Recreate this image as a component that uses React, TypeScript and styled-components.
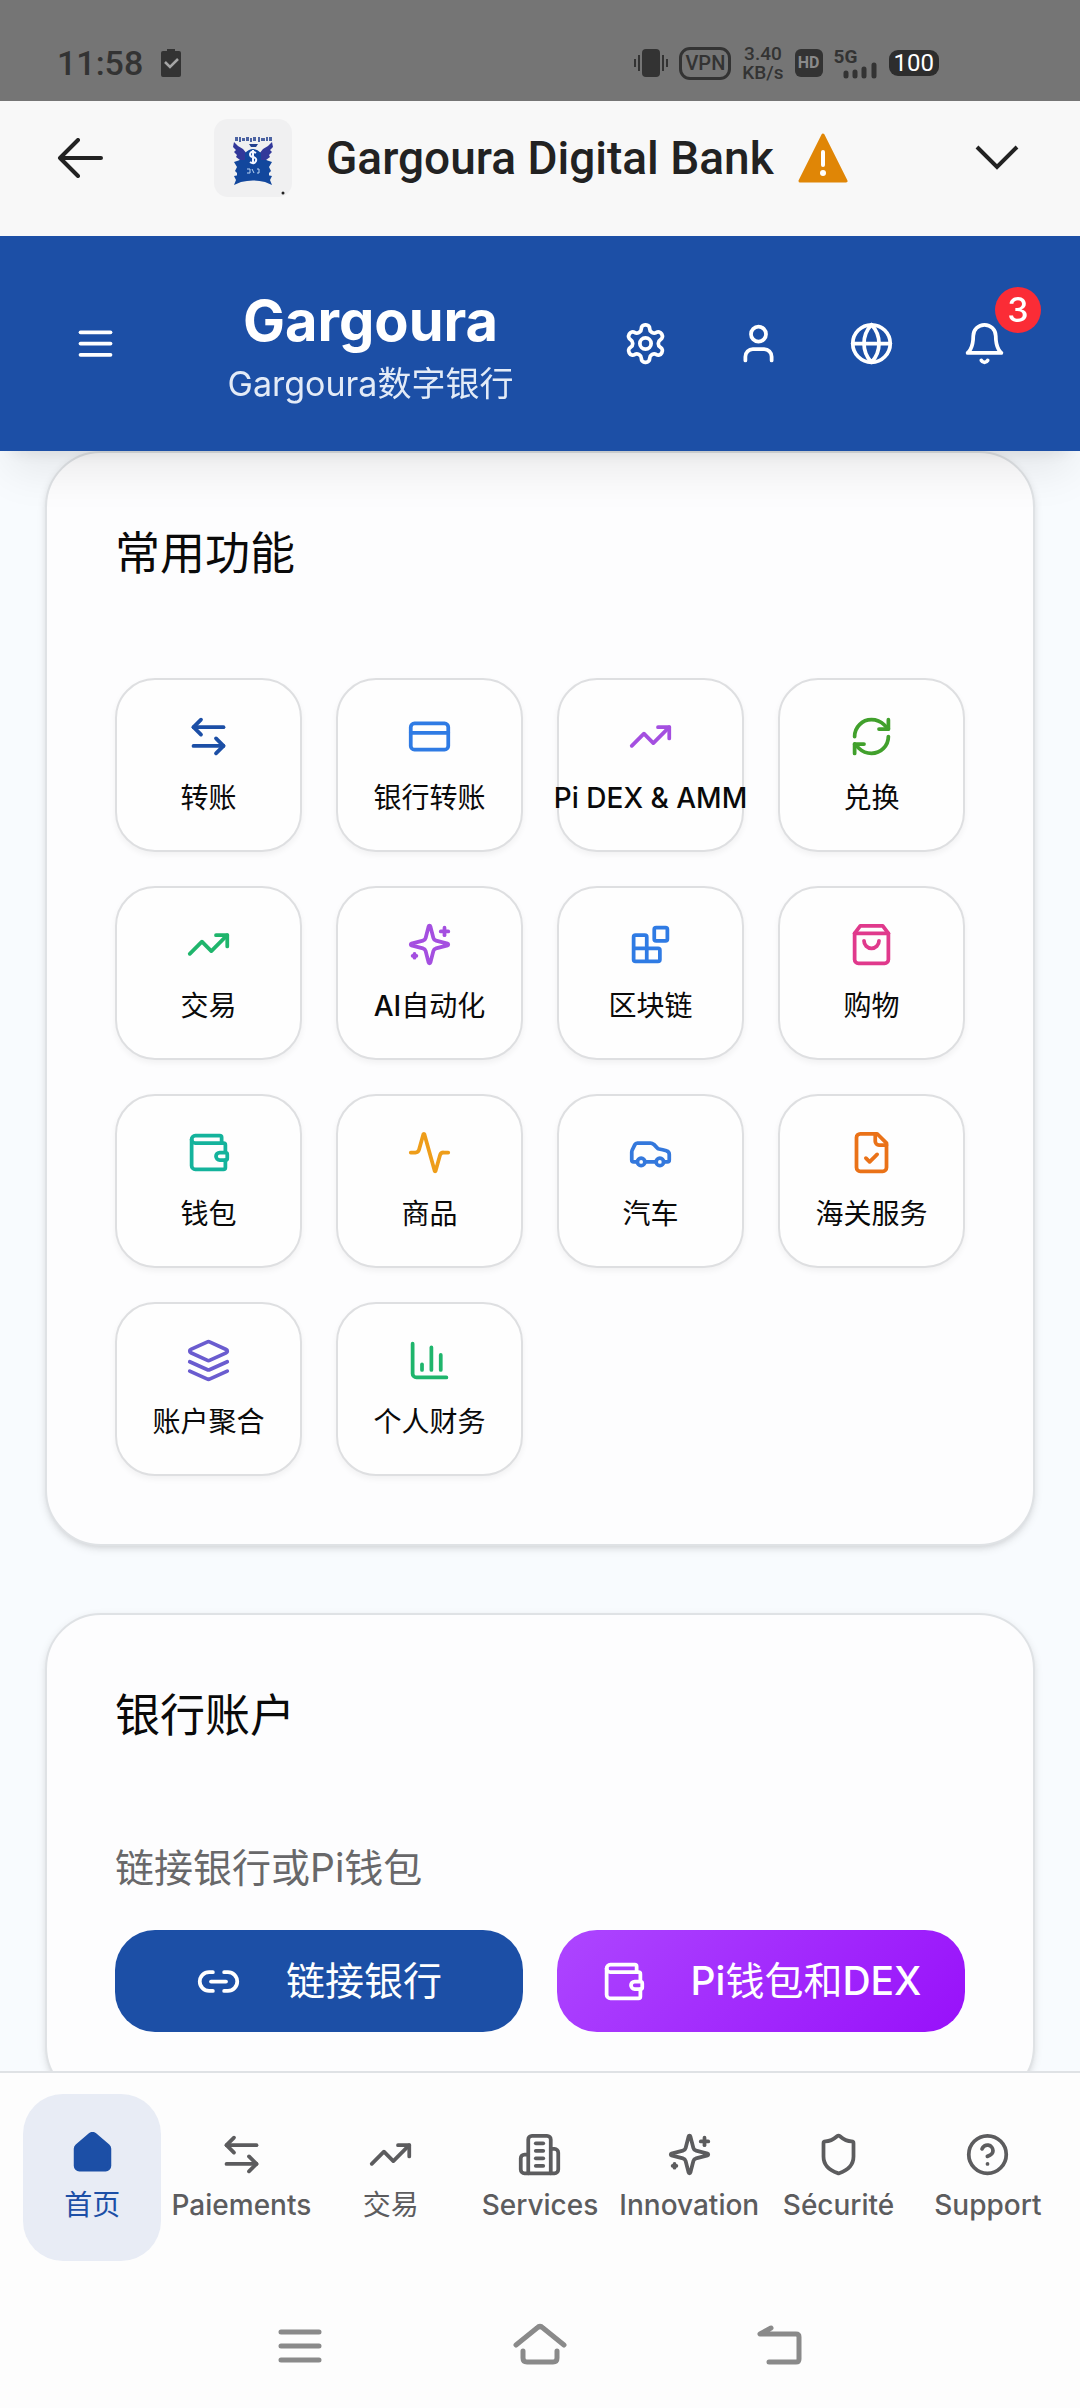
import React from "react";
import styled, { createGlobalStyle } from "styled-components";

const BLUE = "#1c4fa6";
const SANS = `"Inter", "Noto Sans CJK SC", sans-serif`;
const DEVICE = `"Roboto", "Noto Sans CJK SC", sans-serif`;

const GlobalStyle = createGlobalStyle`
  *, *::before, *::after { box-sizing: border-box; }
  body { margin: 0; background: #fdfdfd; font-family: ${SANS}; color: #0a0a0a; }
  button { font: inherit; color: inherit; border: 0; padding: 0; background: none; cursor: pointer; }
  h1, h2, p { margin: 0; font-weight: 400; }
  svg { display: block; flex: none; }
`;

/* ---------- icons ---------- */

const ICONS = {
  menu: ["M4 6h16", "M4 12h16", "M4 18h16"],
  settings: [
    "M12.22 2h-.44a2 2 0 0 0-2 2v.18a2 2 0 0 1-1 1.73l-.43.25a2 2 0 0 1-2 0l-.15-.08a2 2 0 0 0-2.73.73l-.22.38a2 2 0 0 0 .73 2.73l.15.1a2 2 0 0 1 1 1.72v.51a2 2 0 0 1-1 1.74l-.15.09a2 2 0 0 0-.73 2.73l.22.38a2 2 0 0 0 2.73.73l.15-.08a2 2 0 0 1 2 0l.43.25a2 2 0 0 1 1 1.73V20a2 2 0 0 0 2 2h.44a2 2 0 0 0 2-2v-.18a2 2 0 0 1 1-1.73l.43-.25a2 2 0 0 1 2 0l.15.08a2 2 0 0 0 2.73-.73l.22-.39a2 2 0 0 0-.73-2.73l-.15-.08a2 2 0 0 1-1-1.74v-.5a2 2 0 0 1 1-1.74l.15-.09a2 2 0 0 0 .73-2.73l-.22-.38a2 2 0 0 0-2.73-.73l-.15.08a2 2 0 0 1-2 0l-.43-.25a2 2 0 0 1-1-1.73V4a2 2 0 0 0-2-2z",
    "M15 12a3 3 0 1 1-6 0a3 3 0 1 1 6 0",
  ],
  user: ["M19 21v-2a4 4 0 0 0-4-4H9a4 4 0 0 0-4 4v2", "M16 7a4 4 0 1 1-8 0a4 4 0 1 1 8 0"],
  globe: ["M22 12a10 10 0 1 1-20 0a10 10 0 1 1 20 0", "M12 2a14.5 14.5 0 0 0 0 20 14.5 14.5 0 0 0 0-20", "M2 12h20"],
  bell: ["M6 8a6 6 0 0 1 12 0c0 7 3 9 3 9H3s3-2 3-9", "M10.3 21a1.94 1.94 0 0 0 3.4 0"],
  transfer: ["M8 3 4 7l4 4", "M4 7h16", "m16 21 4-4-4-4", "M20 17H4"],
  card: ["M4 5h16a2 2 0 0 1 2 2v10a2 2 0 0 1-2 2H4a2 2 0 0 1-2-2V7a2 2 0 0 1 2-2z", "M2 10h20"],
  trend: ["M22 7 13.5 15.5 8.5 10.5 2 17", "M16 7h6v6"],
  refresh: [
    "M3 12a9 9 0 0 1 9-9 9.75 9.75 0 0 1 6.74 2.74L21 8",
    "M21 3v5h-5",
    "M21 12a9 9 0 0 1-9 9 9.75 9.75 0 0 1-6.74-2.74L3 16",
    "M8 16H3v5",
  ],
  sparkles: [
    "M9.937 15.5A2 2 0 0 0 8.5 14.063l-6.135-1.582a.5.5 0 0 1 0-.962L8.5 9.936A2 2 0 0 0 9.937 8.5l1.582-6.135a.5.5 0 0 1 .963 0L14.063 8.5A2 2 0 0 0 15.5 9.937l6.135 1.581a.5.5 0 0 1 0 .964L15.5 14.063a2 2 0 0 0-1.437 1.437l-1.582 6.135a.5.5 0 0 1-.963 0z",
    "M20 3v4",
    "M22 5h-4",
    "M4 17v2",
    "M5 18H3",
  ],
  blocks: [
    "M15 3h5a1 1 0 0 1 1 1v5a1 1 0 0 1-1 1h-5a1 1 0 0 1-1-1V4a1 1 0 0 1 1-1z",
    "M10 21V8a1 1 0 0 0-1-1H4a1 1 0 0 0-1 1v12a1 1 0 0 0 1 1h12a1 1 0 0 0 1-1v-5a1 1 0 0 0-1-1H3",
  ],
  bag: ["M6 2 3 6v14a2 2 0 0 0 2 2h14a2 2 0 0 0 2-2V6l-3-4Z", "M3 6h18", "M16 10a4 4 0 0 1-8 0"],
  wallet: [
    "M19 7V4a1 1 0 0 0-1-1H5a2 2 0 0 0 0 4h15a1 1 0 0 1 1 1v4h-3a2 2 0 0 0 0 4h3a1 1 0 0 0 1-1v-2a1 1 0 0 0-1-1",
    "M3 5v14a2 2 0 0 0 2 2h15a1 1 0 0 0 1-1v-4",
  ],
  activity: [
    "M22 12h-2.48a2 2 0 0 0-1.93 1.46l-2.35 8.36a.25.25 0 0 1-.48 0L9.24 2.18a.25.25 0 0 0-.48 0l-2.35 8.36A2 2 0 0 1 4.49 12H2",
  ],
  car: [
    "M19 17h2c.6 0 1-.4 1-1v-3c0-.9-.7-1.7-1.5-1.9C18.7 10.6 16 10 16 10s-1.3-1.4-2.2-2.3c-.5-.4-1.1-.7-1.8-.7H5c-.6 0-1.1.4-1.4.9l-1.4 2.9A3.7 3.7 0 0 0 2 12v4c0 .6.4 1 1 1h2",
    "M9 17a2 2 0 1 1-4 0a2 2 0 1 1 4 0",
    "M9 17h6",
    "M19 17a2 2 0 1 1-4 0a2 2 0 1 1 4 0",
  ],
  fileCheck: [
    "M15 2H6a2 2 0 0 0-2 2v16a2 2 0 0 0 2 2h12a2 2 0 0 0 2-2V7Z",
    "M14 2v4a2 2 0 0 0 2 2h4",
    "m9 15 2 2 4-4",
  ],
  layers: [
    "m12.83 2.18a2 2 0 0 0-1.66 0L2.6 6.08a1 1 0 0 0 0 1.83l8.58 3.91a2 2 0 0 0 1.66 0l8.58-3.9a1 1 0 0 0 0-1.83Z",
    "m22 12.65-9.17 4.16a2 2 0 0 1-1.66 0L2 12.65",
    "m22 17.65-9.17 4.16a2 2 0 0 1-1.66 0L2 17.65",
  ],
  chart: ["M3 3v16a2 2 0 0 0 2 2h16", "M18 17V9", "M13 17V5", "M8 17v-3"],
  link: ["M9 17H7A5 5 0 0 1 7 7h2", "M15 7h2a5 5 0 1 1 0 10h-2", "M8 12h8"],
  home: [
    "M3 9a2 2 0 0 1 .709-1.528l7-5.999a2 2 0 0 1 2.582 0l7 5.999A2 2 0 0 1 21 9v9a2 2 0 0 1-2 2H5a2 2 0 0 1-2-2z",
  ],
  building: [
    "M6 22V4a2 2 0 0 1 2-2h8a2 2 0 0 1 2 2v18Z",
    "M6 12H4a2 2 0 0 0-2 2v6a2 2 0 0 0 2 2h2",
    "M18 9h2a2 2 0 0 1 2 2v9a2 2 0 0 1-2 2h-2",
    "M10 6h4",
    "M10 10h4",
    "M10 14h4",
    "M10 18h4",
  ],
  shield: [
    "M20 13c0 5-3.5 7.5-7.66 8.95a1 1 0 0 1-.67-.01C7.5 20.5 4 18 4 13V6a1 1 0 0 1 1-1c2 0 4.5-1.2 6.24-2.72a1.17 1.17 0 0 1 1.52 0C14.51 3.81 17 5 19 5a1 1 0 0 1 1 1z",
  ],
  help: ["M22 12a10 10 0 1 1-20 0a10 10 0 1 1 20 0", "M9.09 9a3 3 0 0 1 5.83 1c0 2-3 3-3 3", "M12 17h.01"],
};

type IconName = keyof typeof ICONS;

function Icon({ name, color = "currentColor", filled = false }: { name: IconName; color?: string; filled?: boolean }) {
  return (
    <svg
      width="45"
      height="45"
      viewBox="0 0 24 24"
      fill={filled ? color : "none"}
      stroke={color}
      strokeWidth="2"
      strokeLinecap="round"
      strokeLinejoin="round"
      aria-hidden="true"
    >
      {ICONS[name].map((d) => (
        <path key={d} d={d} />
      ))}
    </svg>
  );
}

/* ---------- shell ---------- */

const Screen = styled.div`
  display: flex;
  flex-direction: column;
  height: 100vh;
`;

const StatusBar = styled.div`
  display: flex;
  align-items: center;
  justify-content: space-between;
  flex: none;
  padding: 25px 141px 0 57px;
  height: 101px;
  background: #757575;
  color: #333;
  font-family: ${DEVICE};
`;

const StatusGroup = styled.div<{ $gap: number }>`
  display: flex;
  align-items: center;
  gap: ${(p) => p.$gap}px;
`;

const Clock = styled.span`
  font-size: 34px;
  line-height: 40px;
  font-weight: 500;
`;

const VpnBadge = styled.span`
  padding: 0 3px;
  border: 3px solid #333;
  border-radius: 11px;
  font-size: 20px;
  line-height: 27px;
  font-weight: 500;
`;

const Speed = styled.span`
  display: flex;
  flex-direction: column;
  align-items: center;
  font-size: 19px;
  line-height: 19px;
  font-weight: 500;
`;

const HdBadge = styled.span`
  width: 28px;
  border-radius: 6px;
  background: #333;
  color: #8a8a8a;
  font-size: 16px;
  line-height: 28px;
  font-weight: 700;
  text-align: center;
`;

const Network = styled.span`
  display: flex;
  width: 44px;
  font-size: 19px;
  line-height: 20px;
  font-weight: 700;
`;

const SignalBars = styled.svg`
  margin: 12px 0 0 -15px;
`;

const Battery = styled.span`
  padding: 0 5px;
  border-radius: 9px;
  background: #2d2d2d;
  color: #fff;
  font-size: 24px;
  line-height: 26px;
`;

const BrowserBar = styled.header`
  display: flex;
  align-items: center;
  flex: none;
  padding: 18px 60px 39px 57px;
  background: #f8f8f8;
  color: #222;
  font-family: ${DEVICE};
`;

const Site = styled.div`
  display: flex;
  align-items: center;
  margin: 0 auto 0 111px;
`;

const SiteLogo = styled.span`
  width: 78px;
  height: 78px;
  border-radius: 14px;
  background: #f0f0f1;
`;

const SiteName = styled.span`
  margin: 0 24px 0 34px;
  font-size: 46px;
  line-height: 54px;
  font-weight: 500;
`;

const AppHeader = styled.header`
  position: relative;
  z-index: 2;
  display: flex;
  align-items: center;
  justify-content: space-between;
  flex: none;
  padding: 45px;
  background: ${BLUE};
  color: #fff;
  box-shadow: 0 28px 42px -8px rgba(0, 0, 0, 0.08), 0 11px 17px -11px rgba(0, 0, 0, 0.1);
`;

const Brand = styled.div`
  text-align: center;
`;

const BrandName = styled.h1`
  font-size: 56px;
  line-height: 80px;
  font-weight: 700;
`;

const BrandTagline = styled.p`
  font-size: 34px;
  line-height: 45px;
  color: #e3ebf7;
`;

const HeaderActions = styled.div`
  display: flex;
  gap: 12px;
`;

const IconButton = styled.button`
  position: relative;
  display: grid;
  place-items: center;
  width: 101px;
  height: 101px;
`;

const Badge = styled.span`
  position: absolute;
  top: -6px;
  right: -6px;
  width: 46px;
  border-radius: 50%;
  background: #fb2c36;
  font-size: 34px;
  line-height: 46px;
  font-weight: 500;
  text-align: center;
`;

/* ---------- content ---------- */

const Content = styled.main`
  display: flex;
  flex-direction: column;
  gap: 67px;
  flex: 1;
  min-height: 0;
  overflow-y: auto;
  scrollbar-width: none;
  padding: 0 45px;
  background: #f8fbfe;
`;

const Card = styled.section`
  flex: none;
  padding: 68px;
  border: 2px solid #dfe2e5;
  border-radius: 56px;
  background: #fdfdfe;
  box-shadow: 0 3px 8px rgba(0, 0, 0, 0.1), 0 3px 6px -3px rgba(0, 0, 0, 0.1);
`;

const CardTitle = styled.h2`
  margin-bottom: 91px;
  font-size: 45px;
  line-height: 66px;
`;

const TileGrid = styled.div`
  display: grid;
  grid-template-columns: repeat(4, 1fr);
  gap: 34px;
`;

const Tile = styled.button`
  display: flex;
  flex-direction: column;
  align-items: center;
  gap: 22px;
  min-width: 0;
  padding: 34px 0;
  border: 2px solid #dedfe1;
  border-radius: 40px;
  background: #fefefe;
  box-shadow: 0 3px 6px rgba(0, 0, 0, 0.05);
`;

const TileLabel = styled.span<{ $latin?: boolean }>`
  font-size: 28px;
  line-height: 35px;
  font-weight: ${(p) => (p.$latin ? 500 : 400)};
  white-space: nowrap;
`;

const Hint = styled.p`
  margin-bottom: 34px;
  font-size: 39px;
  line-height: 56px;
  color: #68686a;
`;

const ButtonRow = styled.div`
  display: grid;
  grid-template-columns: repeat(2, 1fr);
  gap: 34px;
`;

const ActionButton = styled.button<{ $fill: string }>`
  display: flex;
  align-items: center;
  justify-content: center;
  gap: 45px;
  border-radius: 40px;
  background: ${(p) => p.$fill};
  color: #fff;
  font-size: 39px;
  line-height: 102px;
`;

const Latin = styled.span`
  font-weight: 500;
`;

/* ---------- bottom bars ---------- */

const TabBar = styled.nav`
  display: grid;
  grid-template-columns: repeat(7, minmax(0, 1fr));
  gap: 11px;
  flex: none;
  padding: 21px 23px 22px;
  border-top: 2px solid #dfe2e5;
  background: #fdfdfd;
`;

const Tab = styled.button<{ $active?: boolean }>`
  display: flex;
  flex-direction: column;
  align-items: center;
  gap: 11px;
  padding: 38px 0;
  border-radius: 40px;
  background: ${(p) => (p.$active ? "#e8ecf5" : "transparent")};
  color: ${(p) => (p.$active ? BLUE : "#5c5c5e")};
  font-size: 28px;
  line-height: 35px;
  white-space: nowrap;
`;

const TabLabel = styled.span<{ $latin?: boolean }>`
  font-weight: ${(p) => (p.$latin ? 500 : 400)};
`;

const SystemBar = styled.nav`
  display: flex;
  justify-content: center;
  flex: none;
  height: 125px;
  background: #fdfdfd;
`;

const SystemButton = styled.button`
  display: grid;
  place-items: center;
  width: 240px;
`;

/* ---------- drawings ---------- */

const Crest = () => (
  <svg width="78" height="78" viewBox="0 0 78 78" aria-hidden="true">
    <g fill="#23408f">
      <path d="M21 18h3v4h-3zM25 18h2v5h-2zM28 19h3v3h-3zM32 18h3v4h-3zM36 19h2v4h-2zM39 18h3v4h-3zM44 18h2v5h-2zM47 19h4v3h-4zM52 18h2v4h-2zM55 18h3v4h-3z" opacity=".8" />
      <path d="M35 25h9l-2 3h-5z" />
      <path d="M20 23l4 4 5 3 4 5v8l-4 2-5-2 2-2-4-3 1-2-3-3 2-2-3-3zM58 23l-4 4-5 3-4 5v8l4 2 5-2-2-2 4-3-1-2 3-3-2-2 3-3z" fill="#32389a" />
    </g>
    <g fill="#12479d">
      <path d="M31 34q8-8 16 0v7h5l6 2-3 5 2 4-4 4 5 1-2 4 2 5-7-3q-12-3-24 0l-7 3 2-5-2-4 5-1-4-4 2-4-3-5 6-2h5z" />
      <path d="M23 49h32v9H23z" />
    </g>
    <path d="M42 34q-5-3-6 1 0 3 3 3 4 1 3 4-2 4-6 1M39 31v14" fill="none" stroke="#f2f6ff" strokeWidth="2" />
    <path d="M33 50h3v4h-3M38 50l2 4M43 50h2v4h-2" fill="none" stroke="#b9d4f3" strokeWidth="1" />
    <circle cx="69" cy="74" r="1.5" fill="#222" />
  </svg>
);

const systemStroke = { fill: "none", stroke: "#8a8a8a", strokeWidth: 5, strokeLinecap: "round", strokeLinejoin: "round" } as const;

/* ---------- data ---------- */

type TileData = { icon: IconName; color: string; label: string };

const TILES: TileData[] = [
  { icon: "transfer", color: BLUE, label: "转账" },
  { icon: "card", color: "#2f7be4", label: "银行转账" },
  { icon: "trend", color: "#a44fe0", label: "Pi DEX & AMM" },
  { icon: "refresh", color: "#41a02c", label: "兑换" },
  { icon: "trend", color: "#1fb56c", label: "交易" },
  { icon: "sparkles", color: "#a44fe0", label: "AI自动化" },
  { icon: "blocks", color: "#2f7be4", label: "区块链" },
  { icon: "bag", color: "#e0398c", label: "购物" },
  { icon: "wallet", color: "#14b39c", label: "钱包" },
  { icon: "activity", color: "#ee9d1a", label: "商品" },
  { icon: "car", color: "#3478dc", label: "汽车" },
  { icon: "fileCheck", color: "#ea7218", label: "海关服务" },
  { icon: "layers", color: "#6a5ccf", label: "账户聚合" },
  { icon: "chart", color: "#1fb56c", label: "个人财务" },
];

const TABS: { icon: IconName; label: string; active?: boolean }[] = [
  { icon: "home", label: "首页", active: true },
  { icon: "transfer", label: "Paiements" },
  { icon: "trend", label: "交易" },
  { icon: "building", label: "Services" },
  { icon: "sparkles", label: "Innovation" },
  { icon: "shield", label: "Sécurité" },
  { icon: "help", label: "Support" },
];

const startsLatin = (text: string) => /^[A-Z]/.test(text);

/* Latin runs carry a medium weight, Chinese runs stay regular. */
const Mixed = ({ text }: { text: string }) => (
  <span>
    {text.split(/([A-Za-z]+)/).filter(Boolean).map((part, i) =>
      /[A-Za-z]/.test(part) ? <Latin key={i}>{part}</Latin> : part
    )}
  </span>
);

export default function App() {
  return (
    <Screen>
      <GlobalStyle />

      <StatusBar>
        <StatusGroup $gap={17}>
          <Clock>11:58</Clock>
          <svg width="22" height="30" viewBox="0 0 22 30" aria-hidden="true">
            <path d="M7 1h8v2h4q2 0 2 2v22q0 2-2 2H3q-2 0-2-2V5q0-2 2-2h4z" fill="#333" />
            <path d="M5 14l5 5 8-8" fill="none" stroke="#a5a5a5" strokeWidth="2.5" />
          </svg>
        </StatusGroup>
        <StatusGroup $gap={11}>
          <svg width="34" height="28" viewBox="0 0 34 28" aria-hidden="true">
            <rect x="8" width="18" height="28" rx="4" fill="#333" />
            <path d="M1 10v8M5 6v16M29 6v16M33 10v8" stroke="#333" strokeWidth="2" />
          </svg>
          <VpnBadge>VPN</VpnBadge>
          <Speed>
            <span>3.40</span>
            <span>KB/s</span>
          </Speed>
          <HdBadge>HD</HdBadge>
          <Network>
            <span>5G</span>
            <SignalBars width="36" height="20" viewBox="0 0 36 20" aria-hidden="true">
              <path d="M4 14v3M13 13v4M22 10v7M32 6v11" fill="none" stroke="#333" strokeWidth="5" strokeLinecap="round" />
            </SignalBars>
          </Network>
          <Battery>100</Battery>
        </StatusGroup>
      </StatusBar>

      <BrowserBar>
        <button aria-label="Back">
          <svg width="46" height="40" viewBox="0 0 46 40" fill="none" stroke="#222" strokeWidth="4" strokeLinecap="round" strokeLinejoin="round">
            <path d="M44 20H3M21 2 3 20l18 18" />
          </svg>
        </button>
        <Site>
          <SiteLogo>
            <Crest />
          </SiteLogo>
          <SiteName>Gargoura Digital Bank</SiteName>
          <svg width="50" height="50" viewBox="0 0 50 50" aria-hidden="true">
            <path d="M25 2 48 48H2z" fill="#e08606" stroke="#e08606" strokeWidth="3" strokeLinejoin="round" />
            <path d="M25 19v13" stroke="#fff" strokeWidth="4" strokeLinecap="round" />
            <circle cx="25" cy="40" r="3" fill="#fff" />
          </svg>
        </Site>
        <button aria-label="More">
          <svg width="46" height="28" viewBox="0 0 46 28" fill="none" stroke="#222" strokeWidth="4">
            <path d="M3 3l20 20L43 3" />
          </svg>
        </button>
      </BrowserBar>

      <AppHeader>
        <IconButton aria-label="Menu">
          <Icon name="menu" />
        </IconButton>
        <Brand>
          <BrandName>Gargoura</BrandName>
          <BrandTagline>Gargoura数字银行</BrandTagline>
        </Brand>
        <HeaderActions>
          <IconButton aria-label="Settings">
            <Icon name="settings" />
          </IconButton>
          <IconButton aria-label="Profile">
            <Icon name="user" />
          </IconButton>
          <IconButton aria-label="Language">
            <Icon name="globe" />
          </IconButton>
          <IconButton aria-label="Notifications">
            <Icon name="bell" />
            <Badge>3</Badge>
          </IconButton>
        </HeaderActions>
      </AppHeader>

      <Content>
        <Card>
          <CardTitle>常用功能</CardTitle>
          <TileGrid>
            {TILES.map((tile) => (
              <Tile key={tile.label}>
                <Icon name={tile.icon} color={tile.color} />
                <TileLabel $latin={tile.label.startsWith("Pi")}>
                  {tile.label.startsWith("Pi") ? tile.label : <Mixed text={tile.label} />}
                </TileLabel>
              </Tile>
            ))}
          </TileGrid>
        </Card>

        <Card>
          <CardTitle>银行账户</CardTitle>
          <Hint>链接银行或Pi钱包</Hint>
          <ButtonRow>
            <ActionButton $fill={BLUE}>
              <Icon name="link" />
              <Mixed text="链接银行" />
            </ActionButton>
            <ActionButton $fill="linear-gradient(135deg, #ad46ff, #9810fa)">
              <Icon name="wallet" />
              <Mixed text="Pi钱包和DEX" />
            </ActionButton>
          </ButtonRow>
        </Card>
      </Content>

      <TabBar>
        {TABS.map((tab) => (
          <Tab key={tab.label} $active={tab.active}>
            <Icon name={tab.icon} filled={tab.active} />
            <TabLabel $latin={startsLatin(tab.label)}>{tab.label}</TabLabel>
          </Tab>
        ))}
      </TabBar>

      <SystemBar>
        <SystemButton aria-label="Recent apps">
          <svg width="44" height="34" viewBox="0 0 44 34" {...systemStroke}>
            <path d="M3 3h38M3 17h38M3 31h38" />
          </svg>
        </SystemButton>
        <SystemButton aria-label="Home">
          <svg width="56" height="46" viewBox="0 0 56 46" {...systemStroke}>
            <path d="M4 22 25 5q3-3 6 0l21 17M11 28v7q0 4 4 4h26q4 0 4-4v-7" />
          </svg>
        </SystemButton>
        <SystemButton aria-label="Back">
          <svg width="46" height="46" viewBox="0 0 46 46" {...systemStroke}>
            <path d="M14 5 3 11h36q3 0 3 3v22q0 3-3 3H12" />
          </svg>
        </SystemButton>
      </SystemBar>
    </Screen>
  );
}
